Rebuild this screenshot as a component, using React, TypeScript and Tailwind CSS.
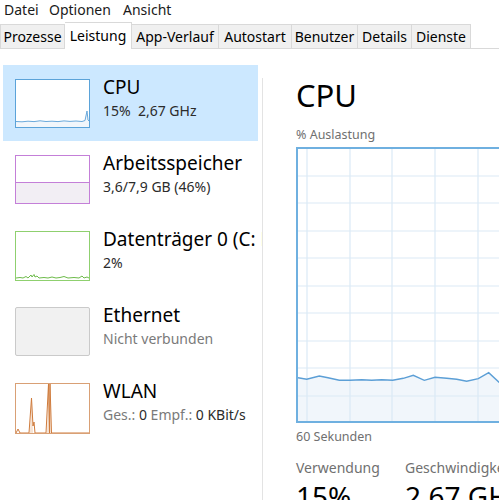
import React from 'react';

// Task-Manager "Leistung" tab, CPU view

const TABS = [
  { label: 'Prozesse', w: 'w-[65px]' },
  { label: 'Leistung', w: 'w-[67px]', active: true },
  { label: 'App-Verlauf', w: 'w-[87px]' },
  { label: 'Autostart', w: 'w-[73px]' },
  { label: 'Benutzer', w: 'w-[66px]' },
  { label: 'Details', w: 'w-[54px]' },
  { label: 'Dienste', w: 'w-[59px]' },
];

const CPU_LINE: [number, number][] = [
  [0, 228.7], [8.7, 230.3], [21.3, 227], [30, 228.7], [41.3, 231.3], [52, 231.3],
  [63.7, 230.7], [73.7, 231.3], [83.7, 230.7], [94.7, 231.3], [105.3, 229.3],
  [115.3, 226.3], [126.3, 231.3], [137, 228.3], [148.7, 229.3], [158.7, 230.3],
  [168.7, 232.3], [180.3, 229.7], [190.7, 223.7], [201, 233.3], [212, 231.5],
  [224, 230.5], [236, 231], [250, 230],
];

function pts(p: [number, number][]) {
  return p.map(([x, y]) => `${x},${y}`).join(' ');
}

function CpuThumb() {
  const line: [number, number][] = [
    [0, 41.5], [6, 41.8], [12, 41.2], [18, 41.6], [24, 40.8], [30, 41.5], [36, 41.2],
    [42, 41.6], [48, 40.9], [54, 41.4], [60, 41], [66, 41.5], [69, 40.5], [71, 31],
    [72, 40], [73, 41],
  ];
  return (
    <div className="box-border h-[49px] w-[75px] shrink-0 border border-[#5ba3d9] bg-white">
      <svg width="73" height="47" viewBox="0 0 73 47" className="block">
        <polygon points={`${pts(line)} 73,47 0,47`} fill="#f1f6fb" />
        <polyline points={pts(line)} fill="none" stroke="#6aa9db" strokeWidth="1" />
      </svg>
    </div>
  );
}

function MemThumb() {
  return (
    <div className="box-border flex h-[49px] w-[75px] shrink-0 flex-col border border-[#c47fd8] bg-white">
      <div className="h-[26px]" />
      <div className="flex-1 border-t border-[#c47fd8] bg-[#f2eef4]" />
    </div>
  );
}

function DiskThumb() {
  const line: [number, number][] = [
    [0, 46], [4, 45.5], [7, 46], [10, 44.5], [12, 46], [15, 43], [16, 45], [18, 42.5],
    [19, 45], [21, 44], [23, 46], [28, 45.5], [32, 46], [36, 45], [40, 46], [44, 45.5],
    [48, 44.5], [52, 46], [58, 45.5], [63, 46], [66, 44], [68, 46], [71, 45], [73, 46],
  ];
  return (
    <div className="box-border h-[50px] w-[75px] shrink-0 border border-[#8fd06f] bg-white">
      <svg width="73" height="48" viewBox="0 0 73 48" className="block">
        <polyline points={pts(line)} fill="none" stroke="#6dbb4a" strokeWidth="1" />
      </svg>
    </div>
  );
}

function EthThumb() {
  return (
    <div className="box-border h-[49px] w-[75px] shrink-0 rounded-[2px] border border-[#cacaca] bg-[#f1f1f1]" />
  );
}

function WlanThumb() {
  return (
    <div className="box-border h-[51px] w-[75px] shrink-0 border border-[#d9a075] bg-white">
      <svg width="73" height="49" viewBox="0 0 73 49" className="block">
        <polygon points="14,49 15.5,14 17,49" fill="#f6e3d4" />
        <polygon points="31,49 32.5,0 34,0 35,49" fill="#f6e3d4" />
        <polyline
          points="0,49 2,45 4,49 13,49 15.5,14 17,42 18,38 19,49 30,49 32.5,0 33.5,49 34,0 35.5,49 73,49"
          fill="none"
          stroke="#cf7b3c"
          strokeWidth="1"
        />
      </svg>
    </div>
  );
}

function SideItem({
  thumb,
  title,
  sub,
  selected = false,
}: {
  thumb: React.ReactNode;
  title: string;
  sub: React.ReactNode;
  selected?: boolean;
}) {
  return (
    <div className={`ml-[3px] flex h-[76px] w-[255px] shrink-0 ${selected ? 'bg-[#cce8ff]' : ''}`}>
      <div className="ml-[12px] mt-[14px]">{thumb}</div>
      <div className="ml-[13px] mt-[10px] whitespace-nowrap">
        <div className="text-[19px] leading-[24px] text-black">{title}</div>
        <div className="mt-[2px] text-[14px] leading-[20px] text-[#2b2b2b]">{sub}</div>
      </div>
    </div>
  );
}

function CpuChart() {
  const vx = [9, 52, 94, 137, 180, 222];
  const hy = [27, 54, 82, 109, 137, 164, 192, 219, 247];
  return (
    <div className="box-border h-[276px] w-[250px] shrink-0 border-2 border-[#6fb0e0] bg-white">
      <svg width="246" height="272" viewBox="0 0 246 272" className="block">
        <polygon points={`${pts(CPU_LINE)} 250,272 0,272`} fill="#f1f6fb" />
        {vx.map((x) => (
          <line key={x} x1={x} y1="0" x2={x} y2="272" stroke="#dbeaf6" strokeWidth="1.2" />
        ))}
        {hy.map((y) => (
          <line key={y} x1="0" y1={y} x2="246" y2={y} stroke="#dbeaf6" strokeWidth="1.2" />
        ))}
        <polyline points={pts(CPU_LINE)} fill="none" stroke="#5c9fd6" strokeWidth="1.4" />
      </svg>
    </div>
  );
}

export default function App() {
  return (
    <div className="relative h-[500px] w-[499px] overflow-hidden bg-white font-['Noto_Sans',sans-serif] text-black">
      {/* Menüleiste */}
      <div className="flex h-[22px] items-start text-[14px] leading-[19px] text-[#1a1a1a]">
        <span className="w-[49px] pl-[4px]">Datei</span>
        <span className="w-[74px]">Optionen</span>
        <span>Ansicht</span>
      </div>

      {/* Tabs */}
      <div className="box-border flex h-[27px] items-end border-b border-[#d9d9d9]">
        {TABS.map((t, i) => (
          <div
            key={t.label}
            className={`box-border flex shrink-0 items-center justify-center border-r border-t border-[#d9d9d9] text-[14px] leading-[19px] ${t.w} ${
              i === 0 ? 'border-l' : ''
            } ${t.active ? 'relative -mb-px h-[27px] bg-white pb-[2px]' : 'h-[24px] bg-[#f0f0f0]'}`}
          >
            {t.label}
          </div>
        ))}
      </div>

      <div className="flex h-[451px]">
        {/* Linke Liste */}
        <div className="flex w-[262px] shrink-0 flex-col overflow-hidden pt-[16px]">
          <SideItem selected thumb={<CpuThumb />} title="CPU" sub={<span>15%&nbsp;&nbsp;2,67 GHz</span>} />
          <SideItem thumb={<MemThumb />} title="Arbeitsspeicher" sub="3,6/7,9 GB (46%)" />
          <SideItem thumb={<DiskThumb />} title="Datenträger 0 (C: D:)" sub="2%" />
          <SideItem
            thumb={<EthThumb />}
            title="Ethernet"
            sub={<span className="text-[#7a7a7a]">Nicht verbunden</span>}
          />
          <SideItem
            thumb={<WlanThumb />}
            title="WLAN"
            sub={
              <span>
                <span className="text-[#7a7a7a]">Ges.:</span> 0 <span className="text-[#7a7a7a]">Empf.:</span> 0 KBit/s
              </span>
            }
          />
        </div>

        <div className="mt-[29px] w-px shrink-0 bg-[#e3e3e3]" />

        {/* Detailansicht */}
        <div className="flex min-w-0 flex-1 flex-col overflow-hidden pl-[33px] pt-[28px]">
          <div className="text-[31px] leading-[36px] text-black">CPU</div>
          <div className="mt-[14px] text-[12.5px] leading-[16px] text-[#707070]">% Auslastung</div>
          <div className="mt-[4px]">
            <CpuChart />
          </div>
          <div className="mt-[6px] text-[12.5px] leading-[16px] text-[#707070]">60 Sekunden</div>
          <div className="mt-[13px] flex whitespace-nowrap">
            <div className="w-[109px] shrink-0">
              <div className="text-[14px] leading-[19px] text-[#707070]">Verwendung</div>
              <div className="mt-[2px] text-[28px] leading-[34px]">15%</div>
            </div>
            <div className="shrink-0">
              <div className="text-[14px] leading-[19px] text-[#707070]">Geschwindigkeit</div>
              <div className="mt-[2px] text-[28px] leading-[34px]">2,67 GHz</div>
            </div>
          </div>
        </div>
      </div>
    </div>
  );
}
